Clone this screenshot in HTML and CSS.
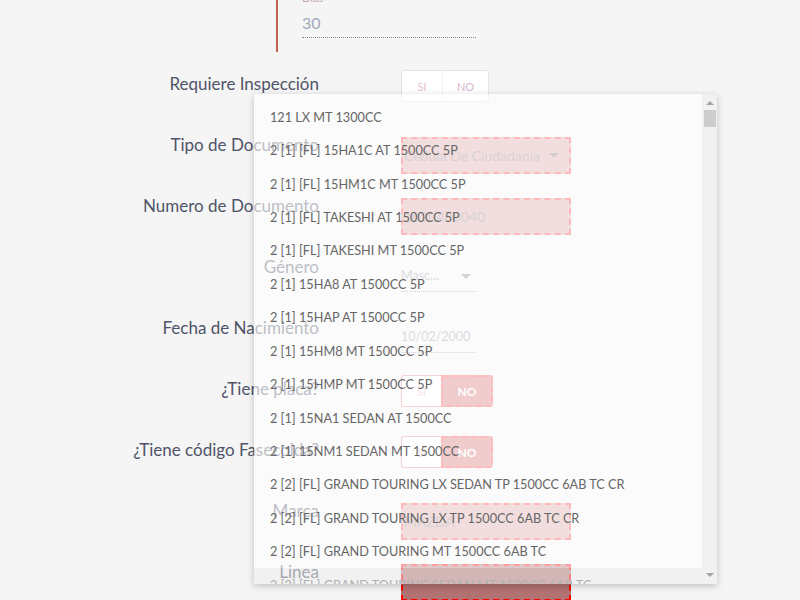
FILE: index.html
```html
<!DOCTYPE html>
<html lang="es">
<head>
<meta charset="utf-8">
<title>Formulario</title>
<link rel="stylesheet" href="styles.css">
</head>
<body>
<div class="page">
  <section class="top">
    <div class="mini-label">Dias</div>
    <div class="top-value">30</div>
  </section>

  <div class="form">
    <div class="row">
      <div class="label">Requiere Inspección</div>
      <div class="field">
        <div class="toggle plain"><span class="opt si">SI</span><span class="opt no">NO</span></div>
      </div>
    </div>
    <div class="row">
      <div class="label">Tipo de Documento</div>
      <div class="field boxed">
        <div class="errbox"><span class="box-text">Cedula De Ciudadania</span><i class="caret box-caret"></i></div>
      </div>
    </div>
    <div class="row">
      <div class="label">Numero de Documento</div>
      <div class="field boxed">
        <div class="errbox"><span class="box-text">1020480040</span></div>
      </div>
    </div>
    <div class="row">
      <div class="label">Género</div>
      <div class="field lined">
        <div class="line-input short"><span>Masc...</span><i class="caret line-caret"></i></div>
      </div>
    </div>
    <div class="row">
      <div class="label">Fecha de Nacimiento</div>
      <div class="field lined">
        <div class="line-input short"><span>10/02/2000</span></div>
      </div>
    </div>
    <div class="row">
      <div class="label">¿Tiene placa?</div>
      <div class="field">
        <div class="toggle err"><span class="opt si">SI</span><span class="opt no">NO</span></div>
      </div>
    </div>
    <div class="row">
      <div class="label">¿Tiene código Fasecolda?</div>
      <div class="field">
        <div class="toggle err"><span class="opt si">SI</span><span class="opt no">NO</span></div>
      </div>
    </div>
    <div class="row">
      <div class="label">Marca</div>
      <div class="field boxed">
        <div class="errbox"><span class="box-text">MAZDA</span></div>
      </div>
    </div>
    <div class="row">
      <div class="label">Linea</div>
      <div class="field boxed">
        <div class="errbox focused"></div>
      </div>
    </div>
  </div>

  <div class="dropdown">
    <ul class="options">
      <li>121 LX MT 1300CC</li>
      <li>2 [1] [FL] 15HA1C AT 1500CC 5P</li>
      <li>2 [1] [FL] 15HM1C MT 1500CC 5P</li>
      <li>2 [1] [FL] TAKESHI AT 1500CC 5P</li>
      <li>2 [1] [FL] TAKESHI MT 1500CC 5P</li>
      <li>2 [1] 15HA8 AT 1500CC 5P</li>
      <li>2 [1] 15HAP AT 1500CC 5P</li>
      <li>2 [1] 15HM8 MT 1500CC 5P</li>
      <li>2 [1] 15HMP MT 1500CC 5P</li>
      <li>2 [1] 15NA1 SEDAN AT 1500CC</li>
      <li>2 [1] 15NM1 SEDAN MT 1500CC</li>
      <li>2 [2] [FL] GRAND TOURING LX SEDAN TP 1500CC 6AB TC CR</li>
      <li>2 [2] [FL] GRAND TOURING LX TP 1500CC 6AB TC CR</li>
      <li>2 [2] [FL] GRAND TOURING MT 1500CC 6AB TC</li>
      <li>2 [2] [FL] GRAND TOURING SEDAN MT 1500CC 6AB TC</li>
    </ul>
    <div class="vscroll">
      <i class="arrow up"></i>
      <div class="thumb"></div>
      <div class="track-fill"></div>
      <i class="arrow down"></i>
    </div>
    <div class="hband"></div>
  </div>
</div>
</body>
</html>
```

FILE: styles.css
```css
html, body {
  margin: 0;
  padding: 0;
}
body {
  background: #f5f5f5;
  font-family: Lato, "Open Sans", "Liberation Sans", sans-serif;
}
.page {
  position: relative;
  width: 800px;
  height: 600px;
  overflow: hidden;
}

/* top block with red accent */
.top {
  display: flow-root;
  margin-left: 276px;
  width: 174px;
  height: 52px;
  border-left: 2px solid #c4614f;
  padding-left: 24px;
  margin-bottom: 18px;
}
.mini-label {
  font-size: 11px;
  line-height: 14px;
  margin-top: -9px;
  color: #c0a8a8;
}
.top-value {
  margin-top: 8px;
  font-size: 16px;
  line-height: 20px;
  color: #a4a9bb;
  padding-bottom: 4px;
  border-bottom: 1px dotted #8a8a8a;
}

/* form */
.row {
  display: grid;
  grid-template-columns: 319px 175px;
  column-gap: 82px;
  height: 61px;
  align-items: start;
}
.label {
  text-align: right;
  font-size: 17px;
  line-height: 24px;
  padding-top: 2px;
  color: #4f5468;
  white-space: nowrap;
}
.field.boxed {
  padding-top: 6px;
}
.field.lined {
  padding-top: 13px;
}

.toggle {
  display: flex;
  height: 32px;
  box-sizing: border-box;
  font-size: 11px;
  border-radius: 3px;
}
.toggle .opt {
  display: flex;
  align-items: center;
  justify-content: center;
}
.toggle.plain {
  width: 88px;
  border: 1px solid #e4e4e4;
  background: #ffffff;
}
.toggle.plain .si {
  width: 40px;
  color: #e6c4d0;
  border-right: 1px solid #f0f0f0;
}
.toggle.plain .no {
  flex: 1;
  color: #dcb6d0;
}
.toggle.err {
  width: 92px;
}
.toggle.err .si {
  width: 40px;
  box-sizing: border-box;
  border: 1px solid #e78c8c;
  border-right: none;
  border-radius: 3px 0 0 3px;
  background: #ffffff;
  color: #e9b7b7;
}
.toggle.err .no {
  flex: 1;
  border: 2px dashed #ff4a4a;
  border-radius: 0 3px 3px 0;
  background: #d87a7a;
  color: #ffffff;
  font-weight: 700;
  font-size: 12px;
}

.errbox {
  width: 170px;
  height: 37px;
  box-sizing: border-box;
  border: 2px dashed #ff4646;
  background: #dea8a8;
  display: flex;
  align-items: center;
  padding: 0 10px 0 1px;
  font-size: 14px;
  color: #958890;
}
.errbox.focused {
  border-color: #ff0000;
  background: #b27272;
}
.box-text {
  flex: 1;
  white-space: nowrap;
}
.caret {
  display: block;
  width: 0;
  height: 0;
  border-left: 5px solid transparent;
  border-right: 5px solid transparent;
  border-top: 5px solid #8d7c82;
}
.line-input {
  width: 75px;
  display: flex;
  align-items: center;
  font-size: 12.5px;
  line-height: 20px;
  color: #9da1b4;
  padding-bottom: 5px;
  border-bottom: 1px dotted #8d8d8d;
}
.line-input span {
  flex: 1;
  white-space: nowrap;
}
.line-caret {
  margin-right: 5px;
  border-top-color: #8e8e98;
}

/* dropdown overlay */
.dropdown {
  position: absolute;
  left: 254px;
  top: 94px;
  width: 463px;
  height: 490px;
  display: flex;
  overflow: hidden;
  box-shadow: 0 2px 7px rgba(0, 0, 0, 0.22);
  z-index: 5;
}
.options {
  flex: 1;
  list-style: none;
  margin: 0;
  padding: 6px 0 0;
  background: linear-gradient(rgba(255, 255, 255, 0.62), rgba(255, 255, 255, 0.62)) top left / 100% 474px no-repeat;
}
.options li {
  height: 33.43px;
  display: flex;
  align-items: center;
  padding-left: 16px;
  font-size: 12.7px;
  color: #666666;
  white-space: nowrap;
}
.vscroll {
  width: 15px;
  background: #f1f1f1;
  display: flex;
  flex-direction: column;
  align-items: center;
}
.arrow {
  display: block;
  width: 0;
  height: 0;
  border-left: 4px solid transparent;
  border-right: 4px solid transparent;
}
.arrow.up {
  margin-top: 7px;
  border-bottom: 4px solid #a3a3a3;
}
.arrow.down {
  margin-bottom: 7px;
  border-top: 4px solid #a3a3a3;
}
.thumb {
  margin-top: 5px;
  width: 12px;
  height: 17px;
  background: #cdcdcd;
}
.track-fill {
  flex: 1;
}
.hband {
  position: absolute;
  left: 0;
  bottom: 0;
  width: 448px;
  height: 16px;
  background: rgba(236, 236, 236, 0.55);
}
```
